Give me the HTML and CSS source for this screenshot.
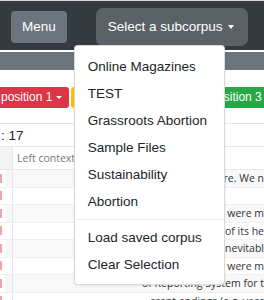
FILE: index.html
```html
<!DOCTYPE html>
<html lang="en">
<head>
  <meta charset="UTF-8">
  <meta name="viewport" content="width=device-width, initial-scale=1.0">
  <title>Corpus</title>
  <link rel="stylesheet" href="styles.css">
</head>
<body>

  <!-- BARRA SUPERIOR -->
  <nav class="navbar">
    <button class="btn btn-menu" type="button">Menu</button>
    <div class="dropdown">
      <button class="btn btn-select" type="button">Select a subcorpus<span class="caret"></span></button>
      <div class="dropdown-menu">
        <a class="dropdown-item">Online Magazines</a>
        <a class="dropdown-item">TEST</a>
        <a class="dropdown-item">Grassroots Abortion</a>
        <a class="dropdown-item">Sample Files</a>
        <a class="dropdown-item">Sustainability</a>
        <a class="dropdown-item">Abortion</a>
        <div class="dropdown-divider"></div>
        <a class="dropdown-item">Load saved corpus</a>
        <a class="dropdown-item">Clear Selection</a>
      </div>
    </div>
  </nav>

  <div class="band"></div>

  <!-- ORDEN DE POSICIONES -->
  <div class="pos-bar">
    <button class="btn-sm btn-red" type="button">position 1<span class="caret"></span></button>
    <button class="btn-sm btn-yellow" type="button">position 2<span class="caret"></span></button>
    <button class="btn-sm btn-green" type="button">position 3<span class="caret"></span></button>
  </div>

  <!-- RESULTADOS -->
  <div class="hits">
    <div class="hits-count">: 17</div>
    <div class="row row-head">
      <div class="cell-mark"></div>
      <div class="cell-left">Left context</div>
    </div>
    <div class="row"><div class="cell-mark"><span class="mark"></span></div><div class="cell-left ctx">re. We n</div></div>
    <div class="row"><div class="cell-mark"><span class="mark"></span></div><div class="cell-left ctx"></div></div>
    <div class="row"><div class="cell-mark"><span class="mark"></span></div><div class="cell-left ctx">were m</div></div>
    <div class="row"><div class="cell-mark"><span class="mark"></span></div><div class="cell-left ctx">of its he</div></div>
    <div class="row"><div class="cell-mark"><span class="mark"></span></div><div class="cell-left ctx">inevitabl</div></div>
    <div class="row"><div class="cell-mark"><span class="mark"></span></div><div class="cell-left ctx">were m</div></div>
    <div class="row"><div class="cell-mark"><span class="mark"></span></div><div class="cell-left ctx">of Reporting System for t</div></div>
    <div class="row"><div class="cell-mark"><span class="mark"></span></div><div class="cell-left ctx">erent endings (e.g. vacc</div></div>
  </div>

</body>
</html>
```

FILE: styles.css
```css
* { box-sizing: border-box; }

body {
  margin: 0;
  width: 264px;
  height: 300px;
  overflow: hidden;
  background: #fff;
  font-family: "Liberation Sans", Arial, sans-serif;
  color: #212529;
}

/* barra superior */
.navbar {
  display: flex;
  align-items: flex-start;
  gap: 32px;
  height: 50px;
  padding: 10px 0 0 11px;
  background: #343a40;
  border-top: 1px solid #d4d6d8;
}
  .btn {
    height: 32px;
    border: 0;
    border-radius: 4px;
    color: #fff;
    font-family: inherit;
    font-size: 13.5px;
    line-height: 32px;
    white-space: nowrap;
  }
  .btn-menu {
    background: #6c757d;
    padding: 0 11px;
  }
  .dropdown {
    position: relative;
  }
  .btn-select {
    background: #5a6268;
    padding: 0 11px 0 9px;
    box-shadow: 0 0 0 3px rgba(130,138,145,.5);
  }
  .caret {
    display: inline-block;
    margin-left: 5px;
    vertical-align: 2px;
    border-top: 4px solid #fff;
    border-left: 3.5px solid transparent;
    border-right: 3.5px solid transparent;
  }

/* menu desplegable */
.dropdown-menu {
  position: absolute;
  top: 34px;
  left: -25px;
  width: 151px;
  padding: 7px 0 6px;
  background: #fff;
  border: 1px solid rgba(0,0,0,.15);
  border-radius: 4px;
  box-shadow: 0 1px 3px rgba(0,0,0,.08);
  z-index: 10;
}
  .dropdown-item {
    display: block;
    height: 27px;
    padding: 0 13px;
    font-size: 13.5px;
    line-height: 27px;
    color: #212529;
    white-space: nowrap;
  }
  .dropdown-divider {
    margin: 4px 0;
    border-top: 1px solid #eef0f2;
  }

.band {
  margin-top: 2px;
  height: 18px;
  background: #6c757d;
}

/* botones de posiciones */
.pos-bar {
  display: flex;
  gap: 2px;
  margin: 17px 0 0 -6px;
  white-space: nowrap;
}
  .btn-sm {
    flex: none;
    height: 21px;
    padding: 0 7px;
    border: 0;
    border-radius: 3px;
    color: #fff;
    font-family: inherit;
    font-size: 12px;
    line-height: 21px;
  }
  .btn-sm .caret {
    margin-left: 4px;
    border-top-width: 3.5px;
    border-left-width: 3px;
    border-right-width: 3px;
  }
  .btn-red { background: #dc3545; }
  .btn-yellow { background: #ffc107; width: 130px; color: #212529; }
  .btn-green { background: #28a745; }

/* tabla de resultados */
.hits {
  margin-top: 15px;
  border-top: 1px solid #e6e6e6;
}
  .hits-count {
    height: 23px;
    padding-left: 1px;
    font-size: 13.5px;
    line-height: 23px;
    border-bottom: 1px solid #e6e6e6;
  }
  .row {
    display: flex;
    height: 17.5px;
    border-bottom: 1px solid #f0f0f0;
  }
  .row:nth-child(odd) { background: #f8f8f8; }
  .row:nth-child(odd) .cell-mark { background: linear-gradient(to right, #fff 5px, #f6f6f6 5px); }
  .row-head {
    height: 23px;
    border-bottom: 1px solid #e6e6e6;
  }
  .cell-mark {
    flex: none;
    width: 13px;
    display: flex;
    align-items: center;
    border-right: 1px solid #e6e6e6;
  }
  .row-head .cell-mark { background: #f3f3f3; }
  .mark {
    width: 2px;
    height: 9px;
    background: #f6a3a3;
  }
  .cell-left {
    flex: 1;
    padding-left: 4px;
    overflow: hidden;
    white-space: nowrap;
    font-family: "Open Sans", sans-serif;
    font-size: 10.5px;
    line-height: 22px;
    color: #777;
  }
  .ctx {
    padding-left: 0;
    text-align: right;
    line-height: 17px;
    color: #333;
  }
```
